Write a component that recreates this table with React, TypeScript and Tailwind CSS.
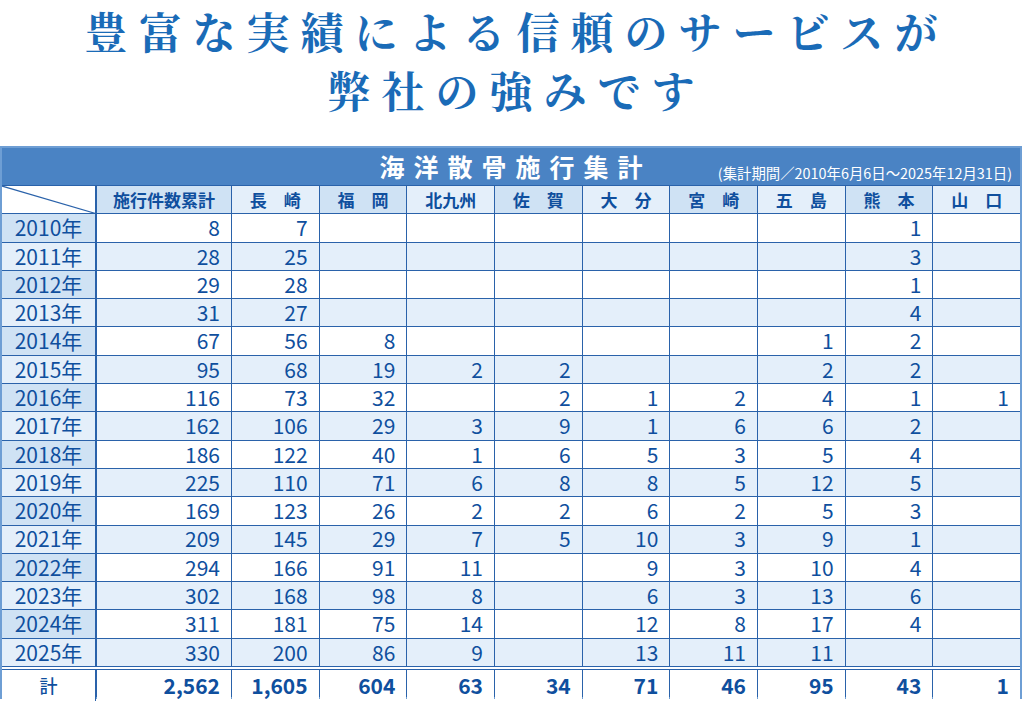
const rows: [string, (number | null)[]][] = [
  ['2010年', [8, 7, null, null, null, null, null, null, 1, null]],
  ['2011年', [28, 25, null, null, null, null, null, null, 3, null]],
  ['2012年', [29, 28, null, null, null, null, null, null, 1, null]],
  ['2013年', [31, 27, null, null, null, null, null, null, 4, null]],
  ['2014年', [67, 56, 8, null, null, null, null, 1, 2, null]],
  ['2015年', [95, 68, 19, 2, 2, null, null, 2, 2, null]],
  ['2016年', [116, 73, 32, null, 2, 1, 2, 4, 1, 1]],
  ['2017年', [162, 106, 29, 3, 9, 1, 6, 6, 2, null]],
  ['2018年', [186, 122, 40, 1, 6, 5, 3, 5, 4, null]],
  ['2019年', [225, 110, 71, 6, 8, 8, 5, 12, 5, null]],
  ['2020年', [169, 123, 26, 2, 2, 6, 2, 5, 3, null]],
  ['2021年', [209, 145, 29, 7, 5, 10, 3, 9, 1, null]],
  ['2022年', [294, 166, 91, 11, null, 9, 3, 10, 4, null]],
  ['2023年', [302, 168, 98, 8, null, 6, 3, 13, 6, null]],
  ['2024年', [311, 181, 75, 14, null, 12, 8, 17, 4, null]],
  ['2025年', [330, 200, 86, 9, null, 13, 11, 11, null, null]],
];

const heads = ['施行件数累計', '長　崎', '福　岡', '北九州', '佐　賀', '大　分', '宮　崎', '五　島', '熊　本', '山　口'];
const totals = ['2,562', '1,605', '604', '63', '34', '71', '46', '95', '43', '1'];

const cols = 'grid grid-cols-[94px_134px_repeat(9,minmax(0,1fr))] gap-px bg-[#2a62aa]';

export default function App() {
  return (
    <div className="w-[1022px] h-[701px] overflow-hidden bg-white font-['Noto_Sans_CJK_JP','Noto_Sans',sans-serif] text-[#0f4f9e]">
      <h1 className="h-[146px] flex flex-col items-center text-[43px] leading-[62px] font-bold text-[#1a6bb7] tracking-[11px] pl-[11px] font-['Noto_Serif_CJK_JP','Noto_Sans_CJK_JP',serif]">
        <span>豊富な実績による信頼のサービスが</span>
        <span className="-mt-[3px]">弊社の強みです</span>
      </h1>

      <div className="border-2 border-[#6e9ed4]">
        <div className="relative h-[37px] bg-[#4a83c4] flex items-center justify-center">
          <span className="text-white text-[25px] font-bold tracking-[9px] pl-[9px] leading-none">海洋散骨施行集計</span>
          <span className="absolute right-[8px] bottom-[5px] text-white text-[14.4px] leading-none">
            (集計期間／2010年6月6日〜2025年12月31日)
          </span>
        </div>

        <div className={`${cols} auto-rows-[27.3px] border-y border-[#2a62aa]`}>
          <div className="relative bg-white border-r border-[#2a62aa]">
            <svg className="absolute inset-0 w-full h-full" viewBox="0 0 100 100" preserveAspectRatio="none">
              <line x1="0" y1="0" x2="100" y2="100" stroke="#2a62aa" strokeWidth="1.2" vectorEffect="non-scaling-stroke" />
            </svg>
          </div>
          {heads.map((h, i) => (
            <div
              key={h}
              className={`flex items-center justify-center text-[17px] font-bold ${i % 2 === 0 ? 'bg-[#cfe2f4]' : 'bg-[#e4effa]'}`}
            >
              {h}
            </div>
          ))}

          {rows.map(([year, vals], r) => (
            <Row key={year} year={year} vals={vals} light={r % 2 === 1} />
          ))}
        </div>

        <div className="h-[2px] bg-white" />

        <div className={`${cols} h-[28px] border-t border-[#2a62aa]`}>
          <div className="bg-white border-r border-[#2a62aa] flex items-center justify-center text-[18px] font-medium">計</div>
          {totals.map((t, i) => (
            <div key={i} className="bg-white flex items-center justify-end pr-[11px] text-[21px] font-bold">
              {t}
            </div>
          ))}
        </div>
      </div>
    </div>
  );
}

function Row({ year, vals, light }: { year: string; vals: (number | null)[]; light: boolean }) {
  const bg = light ? 'bg-[#e4effa]' : 'bg-white';
  return (
    <>
      <div className={`${light ? 'bg-[#e4effa]' : 'bg-[#cfe2f4]'} border-r border-[#2a62aa] flex items-center justify-center text-[21px]`}>
        {year}
      </div>
      {vals.map((v, i) => (
        <div key={i} className={`${bg} flex items-center justify-end pr-[11px] text-[21px]`}>
          {v ?? ''}
        </div>
      ))}
    </>
  );
}
